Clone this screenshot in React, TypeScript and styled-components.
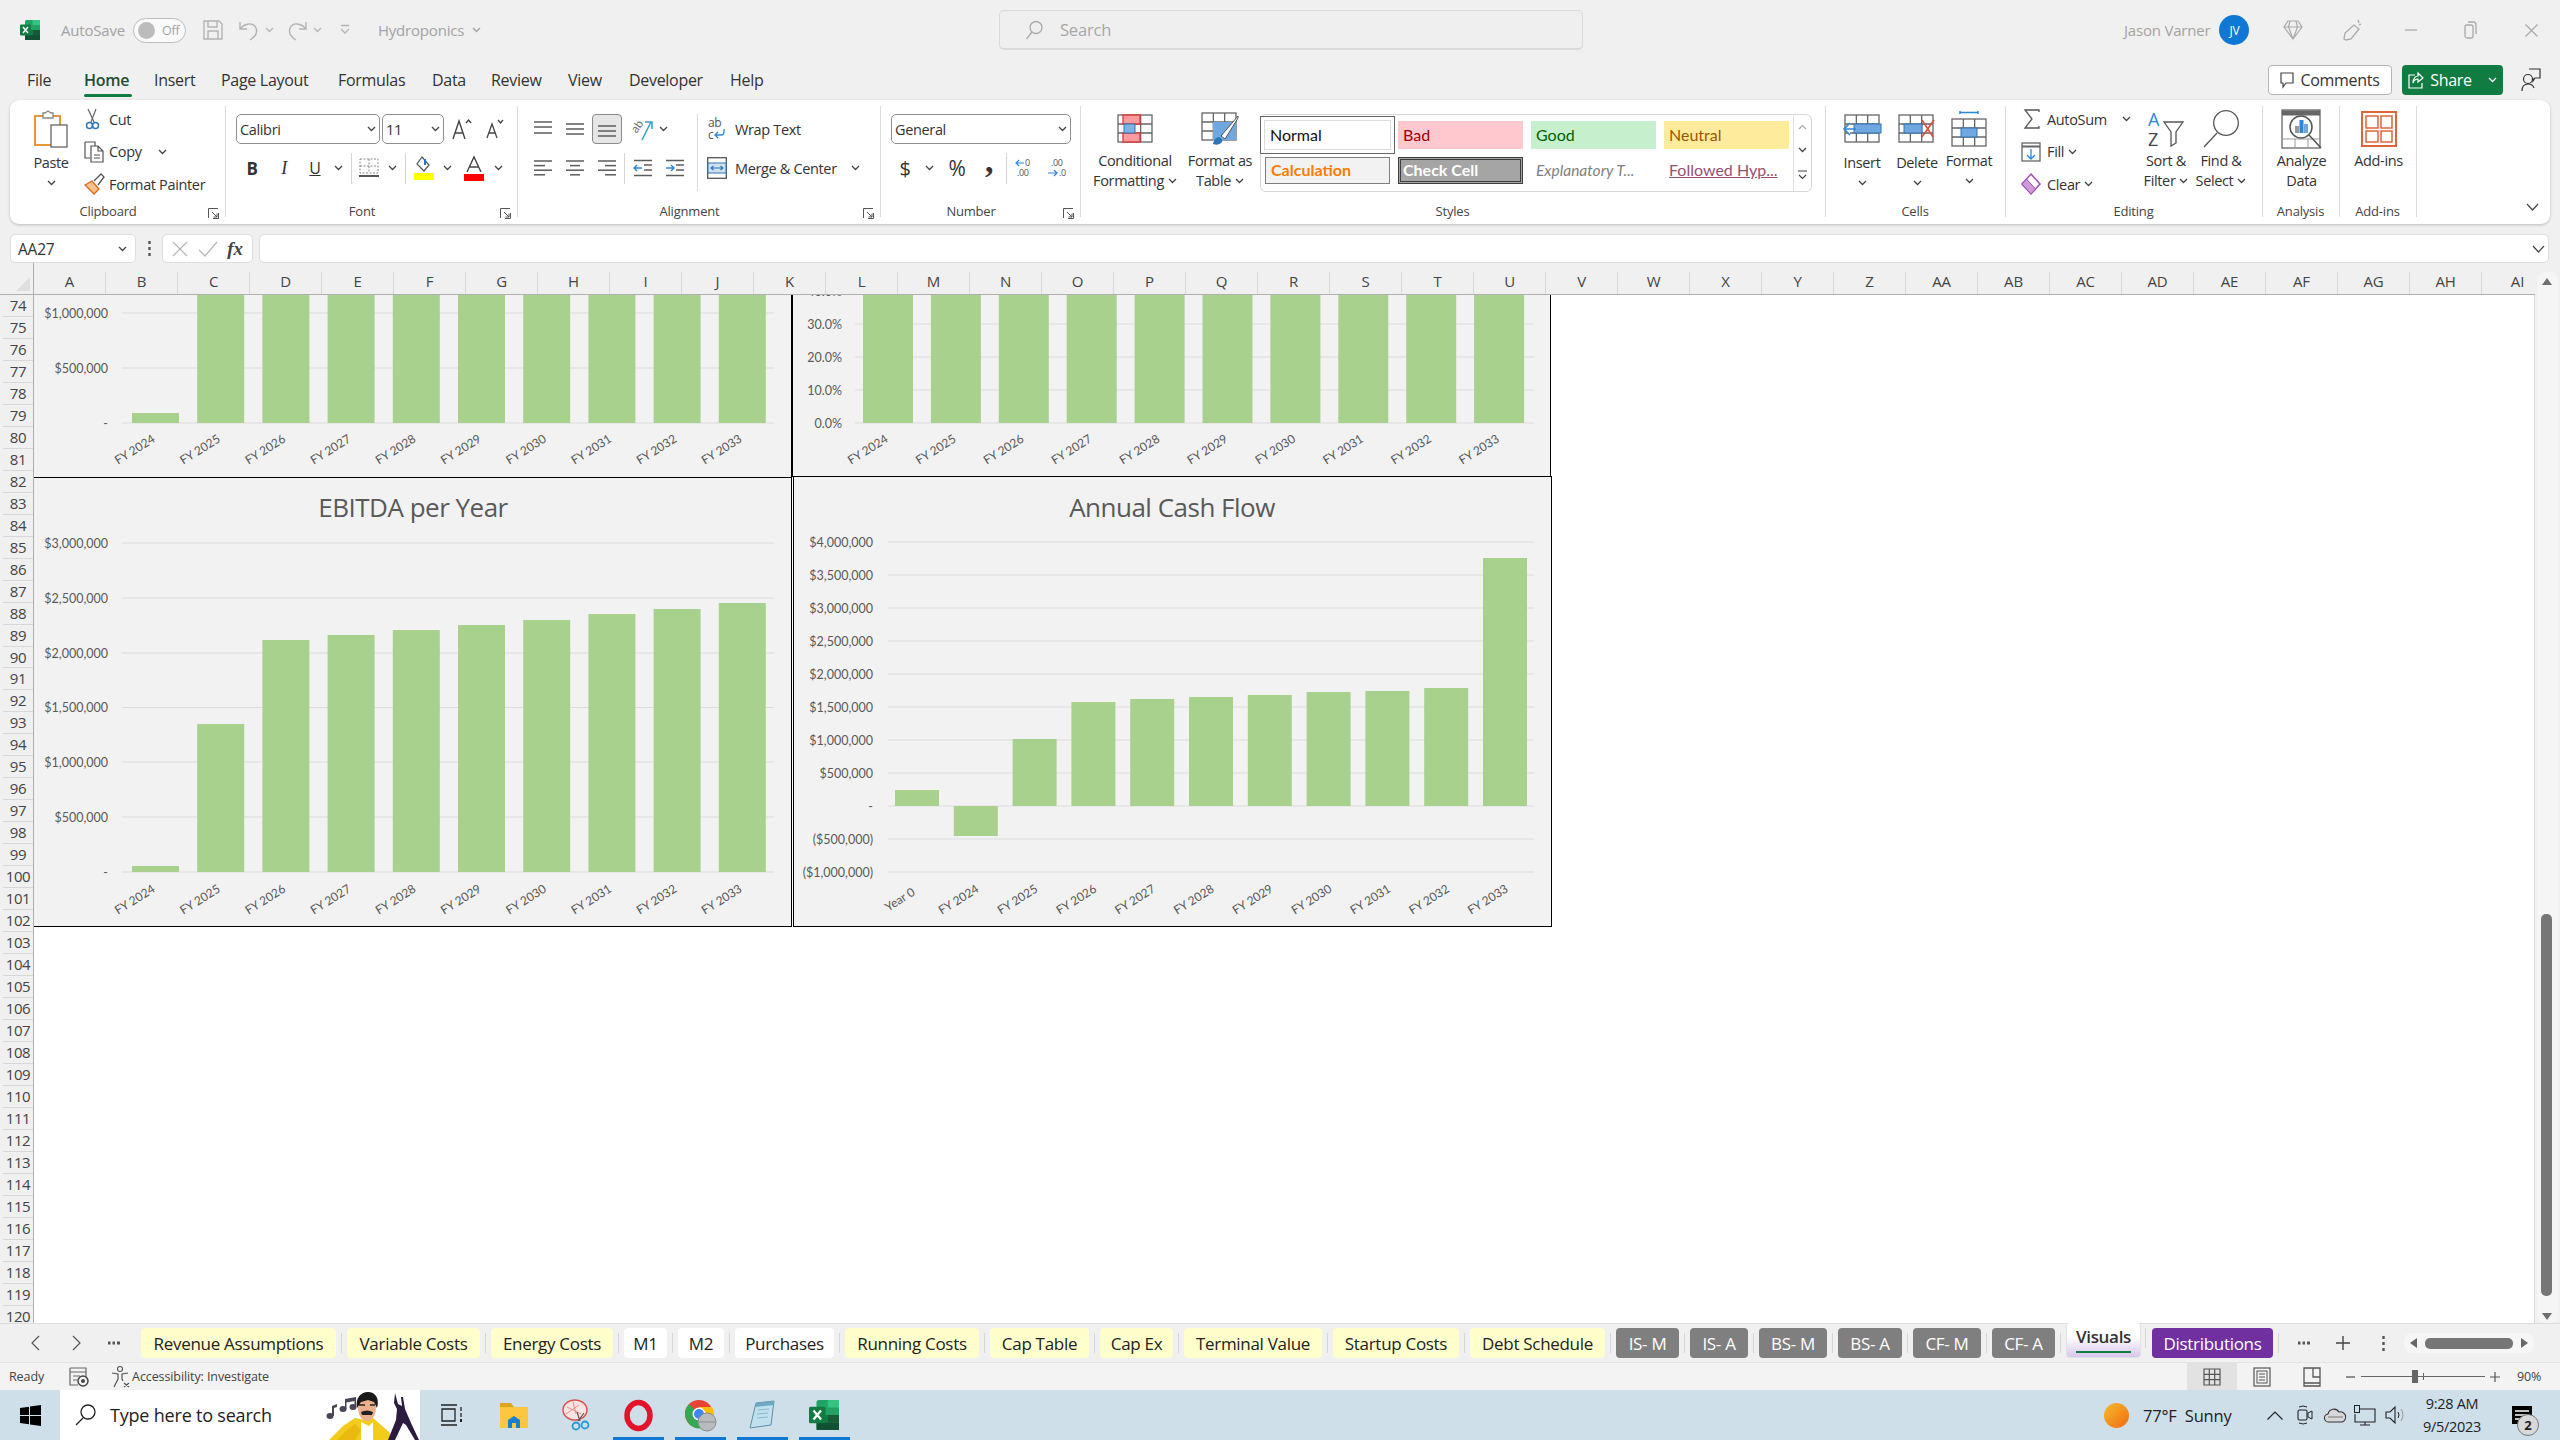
import React from "react";
import styled, { createGlobalStyle } from "styled-components";

const UI = `"Open Sans", "Noto Sans", sans-serif`;
const SHEET = `Lato, "Open Sans", sans-serif`;

const Global = createGlobalStyle`
  html, body { margin: 0; padding: 0; background: #f0f0f0; }
  * { box-sizing: border-box; }
`;

const Page = styled.div`
  width: 2560px;
  height: 1440px;
  display: flex;
  flex-direction: column;
  overflow: hidden;
  background: #f0f0f0;
  font-family: ${UI};
  color: #333;
`;

/* ---------- title bar ---------- */
const TitleBar = styled.div`
  height: 62px;
  padding-bottom: 2px;
  display: flex;
  align-items: center;
  color: #a3a3a3;
  font-size: 15px;
  letter-spacing: -0.2px;
`;
const TitleLeft = styled.div`
  width: 999px;
  display: flex;
  align-items: center;
  padding-left: 20px;
`;
const Gap = styled.span<{ $w: number }>`
  display: inline-block;
  flex: none;
  width: ${(p) => p.$w}px;
`;
const Toggle = styled.div`
  width: 53px;
  height: 25px;
  border: 1.5px solid #bdbdbd;
  border-radius: 13px;
  background: #fafafa;
  display: flex;
  align-items: center;
  padding-left: 4px;
  gap: 7px;
  font-size: 12.5px;
`;
const ToggleDot = styled.span`
  width: 17px;
  height: 17px;
  border-radius: 50%;
  background: #bcbcbc;
`;
const SearchBox = styled.div`
  width: 584px;
  height: 40px;
  border: 1.5px solid #dadada;
  border-bottom-width: 2.5px;
  border-radius: 5px;
  background: #efefef;
  display: flex;
  align-items: center;
  padding-left: 25px;
  gap: 17px;
  font-size: 16.5px;
  color: #a8a8a8;
`;
const TitleRight = styled.div`
  flex: 1;
  display: flex;
  align-items: center;
  padding-left: 541px;
`;
const Avatar = styled.div`
  width: 30px;
  height: 30px;
  border-radius: 50%;
  background: #0f78d4;
  color: #fff;
  font-size: 12px;
  display: flex;
  align-items: center;
  justify-content: center;
`;

/* ---------- menu row ---------- */
const MenuRow = styled.div`
  height: 38px;
  padding: 0 0 2px 27px;
  display: flex;
  align-items: center;
  font-size: 16px;
  letter-spacing: -0.3px;
  color: #333;
`;
const MenuItem = styled.div<{ $active?: boolean; $w: number }>`
  position: relative;
  flex: none;
  width: ${(p) => p.$w}px;
  white-space: nowrap;
  font-weight: ${(p) => (p.$active ? 600 : 400)};
  color: ${(p) => (p.$active ? "#1f4d36" : "#333")};
  &::after {
    content: "";
    display: ${(p) => (p.$active ? "block" : "none")};
    position: absolute;
    left: 0;
    top: 25px;
    width: 48px;
    height: 3px;
    border-radius: 2px;
    background: #107c41;
  }
`;
const MenuRight = styled.div`
  margin-left: auto;
  display: flex;
  align-items: center;
  gap: 10px;
  padding-right: 19px;
`;
const CommentsBtn = styled.div`
  width: 124px;
  height: 30px;
  background: #fff;
  border: 1px solid #b5b5b5;
  border-radius: 4px;
  display: flex;
  align-items: center;
  justify-content: center;
  gap: 6px;
  font-size: 16px;
`;
const ShareBtn = styled.div`
  width: 101px;
  height: 30px;
  margin-right: 8px;
  background: #107c41;
  color: #fff;
  border-radius: 4px;
  display: flex;
  align-items: center;
  justify-content: center;
  gap: 6px;
  font-size: 16px;
`;

/* ---------- ribbon ---------- */
const Ribbon = styled.div`
  position: relative;
  margin: 0 10px;
  height: 124px;
  padding-top: 6px;
  background: #fff;
  border-radius: 9px;
  box-shadow: 0 1px 3px rgba(0, 0, 0, 0.22);
  display: flex;
  font-size: 14.5px;
  letter-spacing: -0.35px;
  color: #333;
`;
const Group = styled.div<{ $w: number }>`
  position: relative;
  flex: none;
  width: ${(p) => p.$w}px;
  height: 118px;
  display: flex;
  flex-direction: column;
  &::after {
    content: "";
    position: absolute;
    right: 0;
    top: 0;
    width: 1px;
    height: 111px;
    background: #dcdcdc;
  }
`;
const GroupBody = styled.div<{ $pl?: number; $center?: boolean }>`
  height: 95px;
  display: flex;
  padding-left: ${(p) => p.$pl ?? 0}px;
  justify-content: ${(p) => (p.$center ? "center" : "flex-start")};
`;
const GroupLabel = styled.div<{ $launch?: boolean }>`
  height: 20px;
  line-height: 20px;
  text-align: center;
  font-size: 13px;
  letter-spacing: -0.2px;
  color: #444;
  padding-right: ${(p) => (p.$launch ? 20 : 2)}px;
`;
const Launcher = styled.span`
  position: absolute;
  right: 7px;
  top: 98px;
  width: 11px;
  height: 11px;
`;
const LargeBtn = styled.div<{ $w: number; $ml?: number }>`
  flex: none;
  width: ${(p) => p.$w}px;
  margin-left: ${(p) => p.$ml ?? 0}px;
  display: flex;
  flex-direction: column;
  align-items: center;
`;
const IconSlot = styled.div`
  height: 45px;
  display: flex;
  align-items: center;
  justify-content: center;
`;
const BtnLine = styled.div<{ $drop?: boolean }>`
  height: 20px;
  line-height: 20px;
  display: flex;
  align-items: center;
  gap: 4px;
  white-space: nowrap;
  margin-top: ${(p) => (p.$drop ? 2 : 0)}px;
`;
const SmallCol = styled.div<{ $w: number; $ml?: number }>`
  flex: none;
  width: ${(p) => p.$w}px;
  margin-left: ${(p) => p.$ml ?? 0}px;
  display: flex;
  flex-direction: column;
  gap: 6.5px;
`;
const SmallRow = styled.div`
  height: 26px;
  display: flex;
  align-items: center;
  white-space: nowrap;
`;
const Stack = styled.div<{ $w?: number; $line?: boolean }>`
  flex: none;
  width: ${(p) => (p.$w ? `${p.$w}px` : "auto")};
  height: 77px;
  margin-top: 8px;
  display: flex;
  flex-direction: column;
  gap: 9px;
  border-right: ${(p) => (p.$line ? "1px solid #dcdcdc" : "none")};
`;
const CtrlRow = styled.div`
  height: 30px;
  display: flex;
  align-items: center;
  white-space: nowrap;
`;
const Slot = styled.div<{ $w: number; $on?: boolean }>`
  flex: none;
  width: ${(p) => p.$w}px;
  height: 30px;
  display: flex;
  align-items: center;
  justify-content: center;
  border-radius: 4px;
  background: ${(p) => (p.$on ? "#e6e6e6" : "transparent")};
  border: ${(p) => (p.$on ? "1px solid #8a8a8a" : "none")};
`;
const RowSep = styled.span<{ $m: number }>`
  flex: none;
  width: 1px;
  height: 31px;
  margin: 0 ${(p) => p.$m}px;
  background: #d4d4d4;
`;
const Combo = styled.div<{ $w: number; $ml?: number }>`
  flex: none;
  width: ${(p) => p.$w}px;
  margin-left: ${(p) => p.$ml ?? 0}px;
  height: 30px;
  border: 1px solid #8f8f8f;
  border-radius: 5px;
  padding: 0 3px;
  display: flex;
  align-items: center;
  justify-content: space-between;
  font-size: 14.5px;
  color: #333;
`;
const Gallery = styled.div`
  flex: none;
  position: relative;
  width: 552px;
  height: 78px;
  margin: 8px 0 0 7px;
  border: 1px solid #d6d6d6;
  border-radius: 6px;
  padding: 6px 0 0 4px;
  display: grid;
  grid-template-columns: repeat(4, 125px);
  grid-template-rows: 28px 27px;
  gap: 8px;
`;
const StyleCell = styled.div<{ $kind: string }>`
  display: flex;
  align-items: center;
  padding: 0 0 2px 5px;
  font-family: ${SHEET};
  font-size: 16px;
  letter-spacing: 0;
  white-space: nowrap;
  ${(p) =>
    ({
      normal: "background:#fff;color:#111;outline:1px solid #ddd;box-shadow:0 0 0 4px #fff,0 0 0 5px #666;",
      bad: "background:#ffc7ce;color:#9c0006;",
      good: "background:#c6efce;color:#006100;",
      neutral: "background:#ffeb9c;color:#9c5700;",
      calc: "background:#f2f2f2;color:#fa7d00;font-weight:700;border:1px solid #7f7f7f;",
      check: "background:#a5a5a5;color:#fff;font-weight:700;border:3px double #3f3f3f;padding-left:2px;",
      note: "color:#7f7f7f;font-style:italic;font-size:15.5px;",
      link: "color:#954f72;text-decoration:underline;",
    }[p.$kind])}
`;
const GalleryScroll = styled.div`
  position: absolute;
  right: 0;
  top: 0;
  width: 18px;
  height: 76px;
  border-left: 1px solid #e2e2e2;
  display: flex;
  flex-direction: column;
  align-items: center;
  justify-content: space-around;
`;
const Collapse = styled.span`
  position: absolute;
  right: 11px;
  top: 103px;
  display: flex;
`;

/* ---------- formula bar ---------- */
const FormulaBar = styled.div`
  height: 29px;
  margin-top: 10px;
  padding: 0 11px 0 10px;
  display: flex;
  align-items: stretch;
`;
const NameBox = styled.div`
  width: 126px;
  background: #fff;
  border: 1px solid #dedede;
  border-radius: 5px;
  display: flex;
  align-items: center;
  justify-content: space-between;
  padding: 0 8px 0 7px;
  font-size: 15.5px;
  letter-spacing: -0.2px;
`;
const Dots = styled.div`
  width: 26px;
  display: flex;
  align-items: center;
  justify-content: center;
`;
const FxBox = styled.div`
  width: 91px;
  background: #fff;
  border: 1px solid #dedede;
  border-radius: 5px;
  display: flex;
  align-items: center;
  justify-content: space-around;
  padding: 0 4px;
  font-family: "Liberation Serif", serif;
  font-style: italic;
  font-weight: 700;
  font-size: 19px;
  color: #444;
`;
const FormulaInput = styled.div`
  flex: 1;
  margin-left: 6px;
  background: #fff;
  border: 1px solid #dedede;
  border-radius: 5px;
  display: flex;
  align-items: center;
  justify-content: flex-end;
  padding-right: 3px;
`;

/* ---------- sheet ---------- */
const ColHeaderRow = styled.div`
  height: 32px;
  display: flex;
  align-items: flex-end;
`;
const Corner = styled.div`
  flex: none;
  width: 34px;
  height: 32px;
  position: relative;
  border-right: 1px solid #b0b0b0;
  border-bottom: 1.5px solid #b0b0b0;
  &::after {
    content: "";
    position: absolute;
    right: 3px;
    bottom: 3px;
    border-style: solid;
    border-width: 0 0 14px 14px;
    border-color: transparent transparent #dfdfdf transparent;
  }
`;
const ColHeaders = styled.div`
  flex: none;
  width: 2501px;
  display: flex;
  overflow: hidden;
  border-bottom: 1.5px solid #b0b0b0;
`;
const ColHead = styled.div`
  flex: none;
  width: 72px;
  height: 22px;
  line-height: 19px;
  text-align: center;
  font-size: 15px;
  letter-spacing: -0.2px;
  border-right: 1px solid #d8d8d8;
  color: #444;
`;
const SheetBody = styled.div`
  height: 1028px;
  display: flex;
`;
const RowHeaders = styled.div`
  flex: none;
  width: 34px;
  overflow: hidden;
  border-right: 1px solid #b0b0b0;
`;
const RowHead = styled.div`
  height: 21.98px;
  line-height: 21px;
  text-align: center;
  font-size: 15px;
  letter-spacing: -0.4px;
  color: #444;
  border-bottom: 1px solid #d8d8d8;
  margin-left: 3px;
`;
const Grid = styled.div`
  position: relative;
  flex: none;
  width: 2501px;
  background: #fff;
  overflow: hidden;
  border-right: 1px solid #dcdcdc;
`;
const ScrollTrack = styled.div`
  position: relative;
  margin: -23px 2px 0 2px;
  width: 21px;
  height: 1051px;
  border-radius: 8px;
  background: #f5f5f5;
`;
const ScrollArrow = styled.span<{ $up?: boolean }>`
  position: absolute;
  left: 5px;
  ${(p) => (p.$up ? "top: 6px;" : "bottom: 3px;")}
  border-style: solid;
  border-width: ${(p) => (p.$up ? "0 5.5px 7px 5.5px" : "7px 5.5px 0 5.5px")};
  border-color: ${(p) =>
    p.$up
      ? "transparent transparent #6e6e6e transparent"
      : "#6e6e6e transparent transparent transparent"};
`;
const ScrollThumb = styled.span`
  position: absolute;
  left: 4px;
  top: 642px;
  width: 11px;
  height: 382px;
  border-radius: 5px;
  background: #767676;
`;
const ChartFrame = styled.div<{ $x: number; $y: number; $w: number; $h: number; $top?: boolean; $left?: boolean }>`
  position: absolute;
  left: ${(p) => p.$x}px;
  top: ${(p) => p.$y}px;
  width: ${(p) => p.$w}px;
  height: ${(p) => p.$h}px;
  background: #f2f2f2;
  border-right: 1px solid #000;
  border-bottom: 1px solid #000;
  border-top: ${(p) => (p.$top ? "1px solid #000" : "none")};
  border-left: ${(p) => (p.$left ? "1px solid #000" : "none")};
  overflow: hidden;
`;
const ChartSvg = styled.svg`
  position: absolute;
  left: 0;
  top: 0;
  display: block;
`;

/* ---------- sheet tabs + status ---------- */
const TabBar = styled.div`
  height: 40px;
  border-top: 1px solid #dcdcdc;
  border-bottom: 1px solid #e4e4e4;
  background: #f0f0f0;
  display: flex;
  align-items: flex-start;
`;
const TabNav = styled.div`
  flex: none;
  width: 141px;
  height: 38px;
  padding-left: 31px;
  display: flex;
  align-items: center;
`;
const Tabs = styled.div`
  display: flex;
  gap: 11px;
  padding-top: 4px;
`;
const Tab = styled.div<{ $w: number; $kind: string }>`
  position: relative;
  flex: none;
  width: ${(p) => p.$w}px;
  height: 30px;
  border-radius: 4px;
  font-size: 17px;
  letter-spacing: -0.3px;
  display: flex;
  align-items: center;
  justify-content: center;
  white-space: nowrap;
  ${(p) =>
    ({
      yellow: "background:#ffffcc;color:#222;",
      white: "background:#fff;color:#222;",
      gray: "background:#7f7f7f;color:#fff;",
      purple: "background:#7030a0;color:#fff;",
      active:
        "height:35px;margin-top:-5px;padding-bottom:8px;font-weight:600;color:#333;background:linear-gradient(#fff,#fff 40%,#d9c7ea);border:1px solid #e2e2e2;border-top:none;",
    }[p.$kind])}
  &::after {
    content: "";
    position: absolute;
    right: -6px;
    top: 5px;
    width: 1px;
    height: 20px;
    background: #d6d6d6;
  }
  &::before {
    content: "";
    display: ${(p) => (p.$kind === "active" ? "block" : "none")};
    position: absolute;
    left: 9px;
    right: 9px;
    bottom: 4px;
    height: 2px;
    background: #107c41;
  }
`;
const TabTools = styled.div`
  flex: none;
  margin-left: 11px;
  height: 38px;
  display: flex;
  align-items: center;
`;
const HScroll = styled.div`
  width: 130px;
  height: 20px;
  margin-left: 19px;
  background: #f6f6f6;
  border-radius: 8px;
  display: flex;
  align-items: center;
  justify-content: space-between;
  padding: 0 6px;
`;
const HThumb = styled.span`
  width: 88px;
  height: 11px;
  border-radius: 5px;
  background: #767676;
`;
const HArrow = styled.span<{ $right?: boolean }>`
  border-style: solid;
  border-width: ${(p) => (p.$right ? "5.5px 0 5.5px 7px" : "5.5px 7px 5.5px 0")};
  border-color: ${(p) =>
    p.$right
      ? "transparent transparent transparent #666"
      : "transparent #666 transparent transparent"};
`;
const StatusBar = styled.div`
  height: 27px;
  background: #f3f3f3;
  display: flex;
  align-items: center;
  padding-left: 9px;
  font-size: 12.5px;
  letter-spacing: -0.1px;
  color: #444;
`;
const StatusRight = styled.div`
  margin-left: auto;
  height: 27px;
  display: flex;
  align-items: center;
`;
const ViewBtn = styled.div<{ $on?: boolean }>`
  width: 50px;
  height: 27px;
  display: flex;
  align-items: center;
  justify-content: center;
  background: ${(p) => (p.$on ? "#e2e2e2" : "transparent")};
`;
const ZoomTrack = styled.div`
  position: relative;
  width: 124px;
  height: 1px;
  margin: 0 5px;
  background: #666;
  &::before {
    content: "";
    position: absolute;
    left: 51px;
    top: -6px;
    width: 6px;
    height: 13px;
    background: #666;
  }
  &::after {
    content: "";
    position: absolute;
    left: 62px;
    top: -3px;
    width: 1px;
    height: 7px;
    background: #666;
  }
`;
const ZoomPct = styled.span`
  width: 36px;
`;

/* ---------- taskbar ---------- */
const Taskbar = styled.div`
  height: 50px;
  background: #cfdfea;
  display: flex;
  align-items: center;
  color: #222;
`;
const StartBtn = styled.div`
  width: 60px;
  display: flex;
  justify-content: center;
`;
const TaskSearch = styled.div`
  position: relative;
  width: 360px;
  height: 50px;
  background: #fff;
  display: flex;
  align-items: center;
  padding-left: 15px;
  gap: 14px;
  font-size: 18px;
  letter-spacing: -0.2px;
  overflow: hidden;
`;
const SearchArt = styled.svg`
  position: absolute;
  right: 0;
  top: 0;
`;
const TaskIcon = styled.div<{ $w?: number; $running?: boolean }>`
  position: relative;
  flex: none;
  width: ${(p) => p.$w ?? 62}px;
  height: 50px;
  display: flex;
  align-items: center;
  justify-content: center;
  &::after {
    content: "";
    display: ${(p) => (p.$running ? "block" : "none")};
    position: absolute;
    left: 6px;
    right: 5px;
    bottom: 0;
    height: 3px;
    background: #0f78d4;
  }
`;
const Tray = styled.div`
  margin-left: auto;
  display: flex;
  align-items: center;
  height: 50px;
`;
const Weather = styled.div`
  width: 131px;
  display: flex;
  align-items: center;
  gap: 14px;
  font-size: 16.5px;
  letter-spacing: -0.2px;
  white-space: pre;
`;
const SunDot = styled.span`
  flex: none;
  width: 25px;
  height: 25px;
  border-radius: 50%;
  background: linear-gradient(135deg, #f5bb2c, #f26a10);
`;
const TrayIcon = styled.div`
  width: 30px;
  display: flex;
  justify-content: center;
`;
const Clock = styled.div`
  width: 64px;
  margin-left: 10px;
  text-align: center;
  font-size: 14.5px;
  line-height: 23px;
  letter-spacing: -0.3px;
  white-space: nowrap;
`;
const Notify = styled.div`
  position: relative;
  width: 76px;
  height: 50px;
  display: flex;
  align-items: center;
  justify-content: center;
`;
const NotifyBadge = styled.span`
  position: absolute;
  left: 33px;
  top: 24px;
  width: 22px;
  height: 22px;
  border-radius: 50%;
  background: #d8d8d8;
  border: 1px solid #777;
  font-size: 13px;
  font-weight: 700;
  display: flex;
  align-items: center;
  justify-content: center;
`;
const BoldB = styled.b`
  font-size: 17px;
`;
const ItalicI = styled.i`
  font-family: "Liberation Serif", serif;
  font-size: 18px;
`;
const UnderU = styled.u`
  font-size: 16px;
`;
const NumGlyph = styled.span<{ $s: number }>`
  font-size: ${(p) => p.$s}px;
`;
const CommaGlyph = styled.b`
  font-family: "Liberation Serif", serif;
  font-size: 34px;
  margin-top: -14px;
`;

/* ---------- icons ---------- */
const IconSvg = styled.svg`
  flex: none;
  display: block;
  overflow: visible;
`;
type Sv = { children: React.ReactNode; w: number; h: number };
const Ico = ({ children, w, h }: Sv) => (
  <IconSvg width={w} height={h} viewBox={`0 0 ${w} ${h}`} fill="none">
    {children}
  </IconSvg>
);
const Chev = ({ c = "#444" }: { c?: string }) => (
  <Ico w={9} h={6}>
    <path d="M1 1l3.5 3.5L8 1" stroke={c} strokeWidth="1.3" />
  </Ico>
);
const G = "#5c5c5c";

const ExcelLogo = ({ s = 20 }: { s?: number }) => (
  <IconSvg width={s} height={s} viewBox="0 0 20 20">
    <rect x="5" y="0" width="15" height="20" rx="1.5" fill="#21a366" />
    <rect x="12.5" y="0" width="7.5" height="5" fill="#33c481" />
    <rect x="5" y="10" width="7.5" height="5" fill="#107c41" />
    <rect x="12.5" y="10" width="7.5" height="5" fill="#185c37" />
    <rect x="5" y="15" width="15" height="5" fill="#0f5132" />
    <rect x="0" y="4.5" width="11" height="11" rx="1" fill="#107c41" />
    <path d="M3 7l5 6M8 7l-5 6" stroke="#fff" strokeWidth="1.5" />
  </IconSvg>
);
const AlignV = ({ at }: { at: number[] }) => (
  <Ico w={18} h={18}>
    {at.map((y) => (
      <path key={y} d={`M0 ${y}h18`} stroke={G} strokeWidth="1.5" />
    ))}
  </Ico>
);
const AlignH = ({ x }: { x: [number, number][] }) => (
  <Ico w={18} h={18}>
    {x.map(([a, b], i) => (
      <path key={i} d={`M${a} ${2 + i * 4.6}H${b}`} stroke={G} strokeWidth="1.5" />
    ))}
  </Ico>
);
const Launch = () => (
  <svg width="11" height="11" viewBox="0 0 11 11" fill="none">
    <path d="M.5 10V.5H10M4 4l5 5M9 5.5V9H5.5M10.5 5v5.5H5" stroke="#555" strokeWidth="1" />
  </svg>
);
const TableGrid = ({ x, y, w, h, c = "#666" }: { x: number; y: number; w: number; h: number; c?: string }) => (
  <g stroke={c} strokeWidth="1.3">
    <rect x={x} y={y} width={w} height={h} />
    <path d={`M${x + w / 3} ${y}v${h}M${x + (2 * w) / 3} ${y}v${h}M${x} ${y + h / 3}h${w}M${x} ${y + (2 * h) / 3}h${w}`} />
  </g>
);

const FreddieArt = () => (
  <SearchArt width="97" height="50" viewBox="0 0 97 50">
    <g fill="#4b4457">
      <ellipse cx="7" cy="26" rx="3.5" ry="3" />
      <path d="M9 26V16l5-2v3l-3 1v8z" />
      <ellipse cx="20" cy="19" rx="3.5" ry="3" />
      <ellipse cx="30" cy="17" rx="3.5" ry="3" />
      <path d="M22 19V9l11-2v10h-1.500V11l-8 1.500V19z" />
    </g>
    <path d="M6 50l14-14 12-8 10 2 8-2 16 14 4 8z" fill="#f3cb1b" />
    <path d="M14 50l10-10 8-6 6 6-6 10z" fill="#e9b90e" />
    <path d="M38 50V32l8 4 4-4v18z" fill="#fff" />
    <ellipse cx="44" cy="18" rx="9" ry="13" fill="#eab08c" />
    <path d="M34 18c-2-10 4-16 11-16s12 6 9 16l-3-6-6-2-7 2z" fill="#191919" />
    <path d="M38 22q6-3 12 0l-1 3h-10z" fill="#222" />
    <path d="M36 15h6M47 15h5" stroke="#222" strokeWidth="1.500" />
    <path
      d="M72 3l3 11 4 2-1-9 2 0 2 12 6 14 8 17h-4l-9-15-3-2-8 17h-7l8-20 1-11-3-6z"
      fill="#2b1b3f"
    />
  </SearchArt>
);

/* ---------- charts ---------- */
interface ChartProps {
  x: number;
  y: number;
  w: number;
  h: number;
  top?: boolean;
  left?: boolean;
  title?: string;
  titleX?: number;
  plot: [number, number];
  labelEnd: number;
  grids: [number, string][];
  bars: [number, number][];
  barX: number;
  barStep: number;
  barW: number;
  labels: string[];
  labelX: number;
  labelStep: number;
  labelY: number;
}

// the svg sits inside the frame's border, so shift the view by the border to keep page coordinates
function Chart(p: ChartProps) {
  const vx = p.x + (p.left ? 1 : 0);
  const vy = p.y + (p.top ? 1 : 0);
  return (
    <ChartFrame $x={p.x - 34} $y={p.y - 295} $w={p.w} $h={p.h} $top={p.top} $left={p.left}>
      <ChartSvg width={p.w} height={p.h} viewBox={`${vx} ${vy} ${p.w} ${p.h}`}>
        {p.title && (
          <text x={p.titleX} y={517} textAnchor="middle" fontFamily={UI} fontSize="26" letterSpacing="-0.5" fill="#595959">
            {p.title}
          </text>
        )}
        {p.grids.map(([gy]) => (
          <line key={gy} x1={p.plot[0]} x2={p.plot[1]} y1={gy} y2={gy} stroke="#dcdcdc" strokeWidth="1" />
        ))}
        {p.grids.map(([gy, t]) => (
          <text key={t} x={p.labelEnd} y={gy + 4.5} textAnchor="end" fontFamily={SHEET} fontSize="12.5" fill="#595959">
            {t}
          </text>
        ))}
        {p.bars.map(([a, b], i) => (
          <rect key={i} x={p.barX + i * p.barStep} y={a} width={p.barW} height={b - a} fill="#a9d18e" />
        ))}
        {p.labels.map((t, i) => {
          const lx = p.labelX + i * p.labelStep;
          return (
            <text
              key={t}
              x={lx}
              y={p.labelY}
              textAnchor="middle"
              fontFamily={SHEET}
              fontSize="12"
              fill="#595959"
              transform={`rotate(-32 ${lx} ${p.labelY})`}
            >
              {t}
            </text>
          );
        })}
      </ChartSvg>
    </ChartFrame>
  );
}

const FY = ["FY 2024", "FY 2025", "FY 2026", "FY 2027", "FY 2028", "FY 2029", "FY 2030", "FY 2031", "FY 2032", "FY 2033"];
const clipped = (base: number, first: number): [number, number][] =>
  FY.map((_, i) => [i === 0 ? first : 280, base]);
const tops = (base: number, t: number[]): [number, number][] => t.map((v) => [v, base]);

const COLS = [
  ..."ABCDEFGHIJKLMNOPQRSTUVWXYZ".split(""),
  ..."ABCDEFGHI".split("").map((c) => `A${c}`),
];
const ROWS = Array.from({ length: 47 }, (_, i) => 74 + i);

const TABS: { n: string; w: number; k: string }[] = [
  { n: "Revenue Assumptions", w: 195, k: "yellow" },
  { n: "Variable Costs", w: 133, k: "yellow" },
  { n: "Energy Costs", w: 122, k: "yellow" },
  { n: "M1", w: 43, k: "white" },
  { n: "M2", w: 46, k: "white" },
  { n: "Purchases", w: 99, k: "white" },
  { n: "Running Costs", w: 134, k: "yellow" },
  { n: "Cap Table", w: 99, k: "yellow" },
  { n: "Cap Ex", w: 73, k: "yellow" },
  { n: "Terminal Value", w: 138, k: "yellow" },
  { n: "Startup Costs", w: 126, k: "yellow" },
  { n: "Debt Schedule", w: 135, k: "yellow" },
  { n: "IS- M", w: 63, k: "gray" },
  { n: "IS- A", w: 58, k: "gray" },
  { n: "BS- M", w: 68, k: "gray" },
  { n: "BS- A", w: 64, k: "gray" },
  { n: "CF- M", w: 68, k: "gray" },
  { n: "CF- A", w: 63, k: "gray" },
  { n: "Visuals", w: 75, k: "active" },
  { n: "Distributions", w: 121, k: "purple" },
];

export default function App() {
  return (
    <Page>
      <Global />
      <TitleBar>
        <TitleLeft>
          <ExcelLogo />
          <Gap $w={21} />
          <span>AutoSave</span>
          <Gap $w={8} />
          <Toggle>
            <ToggleDot />
            Off
          </Toggle>
          <Gap $w={17} />
          <Ico w={20} h={20}>
            <path d="M1 1h15l3 3v15H1z M5 1v6h9V1 M5 19v-8h10v8" stroke="#b3b3b3" strokeWidth="1.4" />
          </Ico>
          <Gap $w={16} />
          <Ico w={20} h={21}>
            <path d="M1 2v7h7M1.500 8.500C6 3 14 2 17 8c2 5-1 9-6 12" stroke="#b3b3b3" strokeWidth="1.400" />
          </Ico>
          <Gap $w={6} />
          <Chev c="#b3b3b3" />
          <Gap $w={13} />
          <Ico w={20} h={21}>
            <path d="M19 2v7h-7M18.500 8.500C14 3 6 2 3 8c-2 5 1 9 6 12" stroke="#b3b3b3" strokeWidth="1.400" />
          </Ico>
          <Gap $w={6} />
          <Chev c="#b3b3b3" />
          <Gap $w={18} />
          <Ico w={10} h={12}>
            <path d="M1 1.500h8M1 5l4 4 4-4" stroke="#b3b3b3" strokeWidth="1.300" />
          </Ico>
          <Gap $w={28} />
          <span>Hydroponics</span>
          <Gap $w={8} />
          <Chev c="#a3a3a3" />
        </TitleLeft>
        <SearchBox>
          <Ico w={18} h={20}>
            <circle cx="11" cy="7.500" r="6" stroke="#aaa" strokeWidth="1.300" />
            <path d="M7 12l-5.500 7" stroke="#aaa" strokeWidth="1.300" />
          </Ico>
          Search
        </SearchBox>
        <TitleRight>
          <span>Jason Varner</span>
          <Gap $w={9} />
          <Avatar>JV</Avatar>
          <Gap $w={34} />
          <Ico w={20} h={20}>
            <path d="M5 1h10l4 6-9 12L1 7zM1 7h18M7 1L5.500 7 10 19l4.500-12L13 1" stroke="#aaa" strokeWidth="1.200" />
          </Ico>
          <Gap $w={39} />
          <Ico w={20} h={22}>
            <path d="M12 6l5 4-8 10-5 1-2-1 1-6zM16 1l1 3M19 5l-2 1" stroke="#aaa" strokeWidth="1.300" />
          </Ico>
          <Gap $w={43} />
          <Ico w={12} h={2}>
            <path d="M0 1h12" stroke="#aaa" strokeWidth="1.300" />
          </Ico>
          <Gap $w={47} />
          <Ico w={13} h={18}>
            <rect x="1" y="4" width="8" height="13" rx="2" stroke="#aaa" strokeWidth="1.300" />
            <path d="M4 1h5q3 0 3 3v9" stroke="#aaa" strokeWidth="1.300" />
          </Ico>
          <Gap $w={48} />
          <Ico w={13} h={13}>
            <path d="M.5.500l12 12M12.500.500l-12 12" stroke="#aaa" strokeWidth="1.300" />
          </Ico>
        </TitleRight>
      </TitleBar>

      <MenuRow>
        <MenuItem $w={57}>File</MenuItem>
        <MenuItem $w={70} $active>Home</MenuItem>
        <MenuItem $w={67}>Insert</MenuItem>
        <MenuItem $w={117}>Page Layout</MenuItem>
        <MenuItem $w={94}>Formulas</MenuItem>
        <MenuItem $w={59}>Data</MenuItem>
        <MenuItem $w={77}>Review</MenuItem>
        <MenuItem $w={61}>View</MenuItem>
        <MenuItem $w={101}>Developer</MenuItem>
        <MenuItem $w={40}>Help</MenuItem>
        <MenuRight>
          <CommentsBtn>
            <Ico w={14} h={18}>
              <path d="M1 2h12v10H6l-3 4v-4H1z" stroke="#444" strokeWidth="1.200" />
            </Ico>
            Comments
          </CommentsBtn>
          <ShareBtn>
            <Ico w={16} h={18}>
              <path d="M7 4H1v13h13v-5M5 12c0-5 3-7 5-7V2l5 5-5 4V8c-2 0-4 1-5 4z" stroke="#fff" strokeWidth="1.200" />
            </Ico>
            Share
            <Gap $w={4} />
            <Chev c="#fff" />
          </ShareBtn>
          <Ico w={20} h={24}>
            <circle cx="7" cy="11" r="4.500" stroke="#333" strokeWidth="1.200" />
            <path d="M1 23c0-5 3-7 6-7s5 1 6 4M8 1h11v9h-5l-2 3v-3" stroke="#333" strokeWidth="1.200" />
          </Ico>
        </MenuRight>
      </MenuRow>

      <Ribbon>
        <Group $w={216}>
          <GroupBody $pl={24}>
            <LargeBtn $w={34}>
              <IconSlot>
                <Ico w={34} h={38}>
                  <rect x="1" y="6" width="25" height="29" stroke="#e8963c" strokeWidth="2" fill="#fff" />
                  <path d="M9 6V3h2l3-2 3 2h2v5H9z" fill="#fff" stroke="#888" strokeWidth="1.300" />
                  <rect x="17" y="15" width="16" height="22" fill="#fff" stroke="#666" strokeWidth="1.300" />
                </Ico>
              </IconSlot>
              <BtnLine $drop>Paste</BtnLine>
              <BtnLine><Chev /></BtnLine>
            </LargeBtn>
            <SmallCol $w={130} $ml={16}>
              <SmallRow>
                <Ico w={25} h={22}>
                  <path d="M4 1l6 13M12 1L7 14" stroke="#666" strokeWidth="1.200" />
                  <circle cx="5.500" cy="17.500" r="3" stroke="#2e75b6" strokeWidth="1.500" />
                  <circle cx="11.500" cy="17.500" r="3" stroke="#2e75b6" strokeWidth="1.500" />
                </Ico>
                Cut
              </SmallRow>
              <SmallRow>
                <Ico w={25} h={22}>
                  <path d="M1 1h10v4M1 1v16h5" stroke="#555" strokeWidth="1.200" />
                  <path d="M7 5h7l5 5v11H7zM14 5v5h5M10 14h6M10 17h6" stroke="#555" strokeWidth="1.200" fill="#fff" />
                </Ico>
                Copy
                <Gap $w={16} />
                <Chev />
              </SmallRow>
              <SmallRow>
                <Ico w={25} h={22}>
                  <path d="M1 12l7-4 7 8-5 5z" fill="#f6c28b" stroke="#d9681d" strokeWidth="1.300" />
                  <path d="M10 8l7-7 3 3-6 8" stroke="#555" strokeWidth="1.300" fill="#fff" />
                </Ico>
                Format Painter
              </SmallRow>
            </SmallCol>
          </GroupBody>
          <GroupLabel $launch>Clipboard</GroupLabel>
          <Launcher><Launch /></Launcher>
        </Group>

        <Group $w={292}>
          <GroupBody $pl={10}>
            <Stack>
              <CtrlRow>
                <Combo $w={144}>Calibri<Chev /></Combo>
                <Combo $w={62} $ml={2}>11<Chev /></Combo>
                <Gap $w={8} />
                <Ico w={20} h={22}>
                  <path d="M1 21L7 3l6 18M3.500 15h7M14 5l2.500-3L19 5" stroke="#444" strokeWidth="1.400" />
                </Ico>
                <Gap $w={14} />
                <Ico w={18} h={20}>
                  <path d="M1 19L6 5l5 14M3 14h6M12 1l2.500 3L17 1" stroke="#444" strokeWidth="1.300" />
                </Ico>
              </CtrlRow>
              <CtrlRow>
                <Slot $w={32}><BoldB>B</BoldB></Slot>
                <Slot $w={32}><ItalicI>I</ItalicI></Slot>
                <Slot $w={30}><UnderU>U</UnderU></Slot>
                <Slot $w={16}><Chev /></Slot>
                <RowSep $m={5} />
                <Slot $w={24}>
                  <Ico w={20} h={20}>
                    <path d="M1 1h18v14H1zM10 1v14M1 8h18" stroke="#888" strokeWidth="1" strokeDasharray="2 1.500" />
                    <path d="M0 18h20" stroke="#555" strokeWidth="2" />
                  </Ico>
                </Slot>
                <Slot $w={22}><Chev /></Slot>
                <RowSep $m={2} />
                <Slot $w={32}>
                  <Ico w={20} h={24}>
                    <path d="M8 1l7 8-5 6-7-7z" stroke="#555" strokeWidth="1.200" fill="#fff" />
                    <path d="M11 9v-6" stroke="#2e75b6" strokeWidth="2" />
                    <rect x="0" y="17" width="20" height="7" fill="#ffff00" />
                  </Ico>
                </Slot>
                <Slot $w={14}><Chev /></Slot>
                <Slot $w={40}>
                  <Ico w={20} h={25}>
                    <path d="M3 16L10 1l7 15M5.500 11h9" stroke="#444" strokeWidth="1.400" />
                    <rect x="0" y="18" width="20" height="7" fill="#ff0000" />
                  </Ico>
                </Slot>
                <Slot $w={8}><Chev /></Slot>
              </CtrlRow>
            </Stack>
          </GroupBody>
          <GroupLabel $launch>Font</GroupLabel>
          <Launcher><Launch /></Launcher>
        </Group>

        <Group $w={363}>
          <GroupBody $pl={10}>
            <Stack $w={170} $line>
              <CtrlRow>
                <Slot $w={30}><AlignV at={[2, 7, 13]} /></Slot>
                <Slot $w={34}><AlignV at={[4, 9, 14]} /></Slot>
                <Slot $w={30} $on><AlignV at={[6, 11, 16]} /></Slot>
                <Slot $w={40}>
                  <Ico w={24} h={26}>
                    <text x="2" y="15" fontFamily={UI} fontSize="11" fill="#666" transform="rotate(-55 7 12)">ab</text>
                    <path d="M12 24L21 6M15 6h7v7" stroke="#2e9fd8" strokeWidth="1.500" />
                  </Ico>
                </Slot>
                <Slot $w={2}><Chev /></Slot>
              </CtrlRow>
              <CtrlRow>
                <Slot $w={30}><AlignH x={[[0, 18], [0, 11], [0, 18], [0, 11]]} /></Slot>
                <Slot $w={34}><AlignH x={[[0, 18], [4, 14], [0, 18], [4, 14]]} /></Slot>
                <Slot $w={30}><AlignH x={[[0, 18], [7, 18], [0, 18], [7, 18]]} /></Slot>
                <RowSep $m={2} />
                <Slot $w={33}>
                  <Ico w={19} h={18}>
                    <path d="M0 9h8M3 6L0 9l3 3" stroke="#2e86d8" strokeWidth="1.400" />
                    <path d="M0 1.500h18M10 6h8M10 11h8M0 16.500h18" stroke={G} strokeWidth="1.400" />
                  </Ico>
                </Slot>
                <Slot $w={30}>
                  <Ico w={19} h={18}>
                    <path d="M0 9h8M5 6l3 3-3 3" stroke="#2e86d8" strokeWidth="1.400" />
                    <path d="M0 1.500h18M10 6h8M10 11h8M0 16.500h18" stroke={G} strokeWidth="1.400" />
                  </Ico>
                </Slot>
              </CtrlRow>
            </Stack>
            <Stack>
              <CtrlRow>
                <Slot $w={37}>
                  <Ico w={19} h={24}>
                    <text x="1" y="10" fontFamily={UI} fontSize="12" fill="#555">ab</text>
                    <text x="1" y="22" fontFamily={UI} fontSize="12" fill="#555">c</text>
                    <path d="M17 12v3q0 3-3 3H9M11 15l-3 3 3 3" stroke="#2e86d8" strokeWidth="1.300" />
                  </Ico>
                </Slot>
                Wrap Text
              </CtrlRow>
              <CtrlRow>
                <Slot $w={37}>
                  <Ico w={20} h={22}>
                    <rect x=".7" y=".7" width="18.600" height="20.600" stroke="#555" strokeWidth="1.300" />
                    <rect x="1" y="6" width="18" height="10" fill="#cfe3f5" stroke="#2e75b6" />
                    <path d="M4 11h12M6.500 9L4 11l2.500 2M13.500 9l2.500 2-2.500 2" stroke="#2e75b6" strokeWidth="1.100" />
                  </Ico>
                </Slot>
                Merge &amp; Center
                <Gap $w={14} />
                <Chev />
              </CtrlRow>
            </Stack>
          </GroupBody>
          <GroupLabel $launch>Alignment</GroupLabel>
          <Launcher><Launch /></Launcher>
        </Group>

        <Group $w={200}>
          <GroupBody $pl={10}>
            <Stack>
              <CtrlRow>
                <Combo $w={180}>General<Chev /></Combo>
              </CtrlRow>
              <CtrlRow>
                <Slot $w={28}><NumGlyph $s={20}>$</NumGlyph></Slot>
                <Slot $w={20}><Chev /></Slot>
                <Slot $w={36}><NumGlyph $s={21}>%</NumGlyph></Slot>
                <Slot $w={28}><CommaGlyph>,</CommaGlyph></Slot>
                <RowSep $m={3} />
                <Slot $w={30}>
                  <Ico w={20} h={20}>
                    <text x="10" y="8" fontFamily={UI} fontSize="9" fill="#555">0</text>
                    <text x="2" y="18" fontFamily={UI} fontSize="9" fill="#555">.00</text>
                    <path d="M9 5H1M4 2L1 5l3 3" stroke="#2e86d8" strokeWidth="1.200" />
                  </Ico>
                </Slot>
                <Slot $w={34}>
                  <Ico w={20} h={20}>
                    <text x="4" y="8" fontFamily={UI} fontSize="9" fill="#555">.00</text>
                    <text x="12" y="18" fontFamily={UI} fontSize="9" fill="#555">.0</text>
                    <path d="M1 15h9M7 12l3 3-3 3" stroke="#2e86d8" strokeWidth="1.200" />
                  </Ico>
                </Slot>
              </CtrlRow>
            </Stack>
          </GroupBody>
          <GroupLabel $launch>Number</GroupLabel>
          <Launcher><Launch /></Launcher>
        </Group>

        <Group $w={745}>
          <GroupBody $pl={9}>
            <LargeBtn $w={90}>
              <IconSlot>
                <Ico w={36} h={29}>
                  <TableGrid x={1} y={1} w={34} h={27} />
                  <path d="M6 1h17v9H6zM6 19h17v9H6z" fill="#ff9a9f" stroke="#d63c3c" strokeWidth="1.300" />
                  <rect x="7" y="10" width="11" height="9" fill="#7fb2e5" stroke="#2e75b6" />
                </Ico>
              </IconSlot>
              <BtnLine>Conditional</BtnLine>
              <BtnLine>Formatting <Chev /></BtnLine>
            </LargeBtn>
            <LargeBtn $w={66} $ml={7}>
              <IconSlot>
                <Ico w={38} h={34}>
                  <TableGrid x={1} y={1} w={34} h={27} />
                  <rect x="12" y="10" width="23" height="18" fill="#6fa8e0" />
                  <path d="M37 4L20 24l4 3L37 6z" fill="#fff" stroke="#555" />
                  <path d="M12 32q6 2 9-2 1-3-3-5-5 1-6 7z" fill="#2e75b6" />
                </Ico>
              </IconSlot>
              <BtnLine>Format as</BtnLine>
              <BtnLine>Table <Chev /></BtnLine>
            </LargeBtn>
            <Gallery>
              <StyleCell $kind="normal">Normal</StyleCell>
              <StyleCell $kind="bad">Bad</StyleCell>
              <StyleCell $kind="good">Good</StyleCell>
              <StyleCell $kind="neutral">Neutral</StyleCell>
              <StyleCell $kind="calc">Calculation</StyleCell>
              <StyleCell $kind="check">Check Cell</StyleCell>
              <StyleCell $kind="note">Explanatory T...</StyleCell>
              <StyleCell $kind="link">Followed Hyp...</StyleCell>
              <GalleryScroll>
                <Ico w={9} h={6}><path d="M1 5l3.500-3.500L8 5" stroke="#aaa" strokeWidth="1.200" /></Ico>
                <Chev />
                <Ico w={9} h={12}><path d="M0 1h9M1 5l3.500 3.500L8 5" stroke="#444" strokeWidth="1.200" /></Ico>
              </GalleryScroll>
            </Gallery>
          </GroupBody>
          <GroupLabel>Styles</GroupLabel>
        </Group>

        <Group $w={180}>
          <GroupBody $pl={9}>
            <LargeBtn $w={54}>
              <IconSlot>
                <Ico w={40} h={30}>
                  <TableGrid x={3} y={1} w={34} h={27} />
                  <rect x="12" y="10" width="27" height="9" fill="#6fa8e0" stroke="#2e75b6" />
                  <path d="M14 15H3M8 9l-6 6 6 6" stroke="#2e86d8" strokeWidth="1.600" fill="#fff" />
                </Ico>
              </IconSlot>
              <BtnLine $drop>Insert</BtnLine>
              <BtnLine><Chev /></BtnLine>
            </LargeBtn>
            <LargeBtn $w={56}>
              <IconSlot>
                <Ico w={38} h={30}>
                  <TableGrid x={1} y={1} w={34} h={27} />
                  <rect x="6" y="10" width="18" height="9" fill="#6fa8e0" stroke="#2e75b6" />
                  <path d="M24 6l11 17M36 6L24 23" stroke="#e04a3a" strokeWidth="1.500" />
                </Ico>
              </IconSlot>
              <BtnLine $drop>Delete</BtnLine>
              <BtnLine><Chev /></BtnLine>
            </LargeBtn>
            <LargeBtn $w={48}>
              <IconSlot>
                <Ico w={36} h={36}>
                  <path d="M9 1.500h18M9 0v3M27 0v3" stroke="#2e86d8" strokeWidth="1.500" />
                  <TableGrid x={1} y={8} w={34} h={27} />
                  <rect x="10" y="17" width="16" height="9" fill="#6fa8e0" stroke="#2e75b6" />
                </Ico>
              </IconSlot>
              <BtnLine>Format</BtnLine>
              <BtnLine><Chev /></BtnLine>
            </LargeBtn>
          </GroupBody>
          <GroupLabel>Cells</GroupLabel>
        </Group>

        <Group $w={257}>
          <GroupBody $pl={15}>
            <SmallCol $w={118}>
              <SmallRow>
                <Gap $w={3} />
                <Ico w={23} h={20}>
                  <path d="M15 3V1H1l7 9-7 9h14v-2" stroke="#555" strokeWidth="1.300" />
                </Ico>
                AutoSum
                <Gap $w={15} />
                <Chev />
              </SmallRow>
              <SmallRow>
                <Ico w={26} h={20}>
                  <rect x="1" y="1" width="18" height="18" stroke="#666" strokeWidth="1.300" />
                  <path d="M1 4.500h18" stroke="#666" strokeWidth="2" />
                  <path d="M10 7v10M6 13l4 4 4-4" stroke="#2e86d8" strokeWidth="1.300" />
                </Ico>
                Fill
                <Gap $w={4} />
                <Chev />
              </SmallRow>
              <SmallRow>
                <Ico w={26} h={22}>
                  <path d="M10 1l9 10-9 10-9-10z" fill="#fff" stroke="#a34bb5" strokeWidth="1.500" />
                  <path d="M1 11l4.500-5 9 10-4.500 5z" fill="#cf9ad8" stroke="#a34bb5" strokeWidth="1" />
                </Ico>
                Clear
                <Gap $w={4} />
                <Chev />
              </SmallRow>
            </SmallCol>
            <LargeBtn $w={54}>
              <IconSlot>
                <Ico w={37} h={36}>
                  <text x="0" y="15" fontFamily={UI} fontSize="18" fill="#2e86d8">A</text>
                  <text x="0" y="35" fontFamily={UI} fontSize="18" fill="#444">Z</text>
                  <path d="M16 11h19l-7 10v11l-5 3V21z" stroke="#555" strokeWidth="1.300" />
                </Ico>
              </IconSlot>
              <BtnLine>Sort &amp;</BtnLine>
              <BtnLine>Filter <Chev /></BtnLine>
            </LargeBtn>
            <LargeBtn $w={56}>
              <IconSlot>
                <Ico w={36} h={38}>
                  <circle cx="23" cy="13" r="12.300" stroke="#555" strokeWidth="1.300" />
                  <path d="M14 23L1 37" stroke="#555" strokeWidth="1.300" />
                </Ico>
              </IconSlot>
              <BtnLine>Find &amp;</BtnLine>
              <BtnLine>Select <Chev /></BtnLine>
            </LargeBtn>
          </GroupBody>
          <GroupLabel>Editing</GroupLabel>
        </Group>

        <Group $w={77}>
          <GroupBody $center>
            <LargeBtn $w={60}>
              <IconSlot>
                <Ico w={42} h={40}>
                  <rect x="1" y="1" width="38" height="38" stroke="#666" strokeWidth="1.300" fill="#fff" />
                  <path d="M1 4h38" stroke="#666" strokeWidth="5" />
                  <path d="M1 30h38M14 30v9M27 30v9" stroke="#999" />
                  <circle cx="20" cy="18" r="11" stroke="#555" strokeWidth="1.500" fill="#fff" />
                  <rect x="14" y="17" width="4" height="7" fill="#999" />
                  <rect x="18.500" y="11" width="4" height="13" fill="#2e86d8" />
                  <rect x="23" y="15" width="4" height="9" fill="#6fa8e0" />
                  <path d="M28 26l12 13" stroke="#555" strokeWidth="1.500" />
                </Ico>
              </IconSlot>
              <BtnLine>Analyze</BtnLine>
              <BtnLine>Data</BtnLine>
            </LargeBtn>
          </GroupBody>
          <GroupLabel>Analysis</GroupLabel>
        </Group>

        <Group $w={77}>
          <GroupBody $center>
            <LargeBtn $w={60}>
              <IconSlot>
                <Ico w={36} h={36}>
                  <rect x="1" y="1" width="34" height="34" stroke="#e0653a" strokeWidth="2" />
                  <rect x="5" y="5" width="12" height="12" stroke="#e0653a" strokeWidth="1.500" />
                  <rect x="20" y="5" width="11" height="12" stroke="#e0653a" strokeWidth="1.500" />
                  <rect x="5" y="20" width="12" height="11" stroke="#e0653a" strokeWidth="1.500" />
                  <rect x="20" y="20" width="11" height="11" stroke="#e0653a" strokeWidth="1.500" />
                </Ico>
              </IconSlot>
              <BtnLine>Add-ins</BtnLine>
            </LargeBtn>
          </GroupBody>
          <GroupLabel>Add-ins</GroupLabel>
        </Group>
        <Collapse>
          <Ico w={13} h={8}><path d="M1 1l5.500 6L12 1" stroke="#444" strokeWidth="1.200" /></Ico>
        </Collapse>
      </Ribbon>

      <FormulaBar>
        <NameBox>AA27<Chev /></NameBox>
        <Dots>
          <Ico w={3} h={15}>
            <path d="M1.500 0v3M1.500 6v3M1.500 12v3" stroke="#555" strokeWidth="2.400" />
          </Ico>
        </Dots>
        <FxBox>
          <Ico w={16} h={16}><path d="M1 1l14 14M15 1L1 15" stroke="#b5b5b5" strokeWidth="1.200" /></Ico>
          <Ico w={20} h={16}><path d="M1 9l6 6L19 1" stroke="#b5b5b5" strokeWidth="1.200" /></Ico>
          <span>fx</span>
        </FxBox>
        <FormulaInput>
          <Ico w={13} h={8}><path d="M1 1l5.500 6L12 1" stroke="#444" strokeWidth="1.200" /></Ico>
        </FormulaInput>
      </FormulaBar>

      <ColHeaderRow>
        <Corner />
        <ColHeaders>
          {COLS.map((c) => (
            <ColHead key={c}>{c}</ColHead>
          ))}
        </ColHeaders>
      </ColHeaderRow>

      <SheetBody>
        <RowHeaders>
          {ROWS.map((r) => (
            <RowHead key={r}>{r}</RowHead>
          ))}
        </RowHeaders>
        <Grid>
          <Chart
            x={34} y={295} w={758} h={183}
            plot={[122, 774]} labelEnd={108}
            grids={[[313, "$1,000,000"], [368, "$500,000"], [423, "-"]]}
            bars={clipped(423, 413)} barX={132} barStep={65.2} barW={47}
            labels={FY} labelX={137} labelStep={65.2} labelY={453}
          />
          <Chart
            x={792} y={295} w={759} h={182} left
            plot={[855, 1534]} labelEnd={842}
            grids={[[291, "40.0%"], [324, "30.0%"], [357, "20.0%"], [390, "10.0%"], [423, "0.0%"]]}
            bars={clipped(423, 280)} barX={863} barStep={67.9} barW={50}
            labels={FY} labelX={870} labelStep={67.9} labelY={453}
          />
          <Chart
            x={34} y={478} w={758} h={449}
            title="EBITDA per Year" titleX={413}
            plot={[122, 774]} labelEnd={108}
            grids={[[543, "$3,000,000"], [598, "$2,500,000"], [653, "$2,000,000"], [707.500, "$1,500,000"], [762, "$1,000,000"], [817, "$500,000"], [872, "-"]]}
            bars={tops(872, [866, 724, 640, 635, 630, 625, 620, 614, 609, 603])} barX={132} barStep={65.2} barW={47}
            labels={FY} labelX={137} labelStep={65.2} labelY={903}
          />
          <Chart
            x={793} y={476} w={759} h={451} top left
            title="Annual Cash Flow" titleX={1172}
            plot={[888, 1534]} labelEnd={873}
            grids={[[542, "$4,000,000"], [575, "$3,500,000"], [608, "$3,000,000"], [641, "$2,500,000"], [674, "$2,000,000"], [707, "$1,500,000"], [740, "$1,000,000"], [773, "$500,000"], [806, "-"], [839, "($500,000)"], [872, "($1,000,000)"]]}
            bars={[[790, 806], [806, 836], [739, 806], [702, 806], [699, 806], [697, 806], [695, 806], [692, 806], [691, 806], [688, 806], [558, 806]]}
            barX={895} barStep={58.8} barW={44}
            labels={["Year 0", ...FY]} labelX={902} labelStep={58.8} labelY={903}
          />
        </Grid>
        <ScrollTrack>
          <ScrollArrow $up />
          <ScrollThumb />
          <ScrollArrow />
        </ScrollTrack>
      </SheetBody>

      <TabBar>
        <TabNav>
          <Ico w={9} h={16}><path d="M8 1L1 8l7 7" stroke="#555" strokeWidth="1.200" /></Ico>
          <Gap $w={32} />
          <Ico w={9} h={16}><path d="M1 1l7 7-7 7" stroke="#555" strokeWidth="1.200" /></Ico>
          <Gap $w={26} />
          <Ico w={14} h={4}><path d="M1 2h2.500M5.500 2H8M10 2h3" stroke="#555" strokeWidth="3" /></Ico>
        </TabNav>
        <Tabs>
          {TABS.map((t) => (
            <Tab key={t.n} $w={t.w} $kind={t.k}>{t.n}</Tab>
          ))}
        </Tabs>
        <TabTools>
          <Gap $w={13} />
          <Ico w={14} h={4}><path d="M1 2h2.500M5.500 2H8M10 2h3" stroke="#555" strokeWidth="3" /></Ico>
          <Gap $w={25} />
          <Ico w={14} h={14}><path d="M7 0v14M0 7h14" stroke="#444" strokeWidth="1.400" /></Ico>
          <Gap $w={32} />
          <Ico w={3} h={15}><path d="M1.500 0v3M1.500 6v3M1.500 12v3" stroke="#555" strokeWidth="2.400" /></Ico>
          <HScroll>
            <HArrow />
            <HThumb />
            <HArrow $right />
          </HScroll>
        </TabTools>
      </TabBar>

      <StatusBar>
        Ready
        <Gap $w={25} />
        <Ico w={20} h={20}>
          <path d="M1 1h16v15M1 1v17h8M1 5h16M4 9h7M4 13h4" stroke="#666" strokeWidth="1.200" />
          <circle cx="14" cy="14" r="5" stroke="#444" strokeWidth="1.500" fill="#f3f3f3" />
          <circle cx="14" cy="14" r="2" fill="#444" />
        </Ico>
        <Gap $w={22} />
        <Ico w={20} h={22}>
          <circle cx="9" cy="3" r="2.500" stroke="#555" strokeWidth="1.100" />
          <path d="M1 7l6 1v5l-4 8M17 7l-6 1v5l1 2M13 17l5 4M18 17l-5 4" stroke="#555" strokeWidth="1.200" />
        </Ico>
        <Gap $w={1} />
        <span>Accessibility: Investigate</span>
        <StatusRight>
          <ViewBtn $on>
            <Ico w={18} h={18}>
              <path d="M1 1h16v16H1zM6.300 1v16M11.700 1v16M1 6.300h16M1 11.700h16" stroke="#555" strokeWidth="1.200" />
            </Ico>
          </ViewBtn>
          <ViewBtn>
            <Ico w={18} h={20}>
              <rect x="1" y="1" width="16" height="18" stroke="#555" strokeWidth="1.200" />
              <rect x="4" y="4" width="10" height="12" stroke="#555" />
              <path d="M6 7h6M6 10h6M6 13h6" stroke="#555" />
            </Ico>
          </ViewBtn>
          <ViewBtn>
            <Ico w={18} h={20}>
              <path d="M1 1h16v15H1zM10 1v9h7M1 16v3h16v-3" stroke="#555" strokeWidth="1.300" />
            </Ico>
          </ViewBtn>
          <Gap $w={9} />
          <Ico w={9} h={2}><path d="M0 1h9" stroke="#555" strokeWidth="1.300" /></Ico>
          <Gap $w={1} />
          <ZoomTrack />
          <Ico w={10} h={10}><path d="M5 0v10M0 5h10" stroke="#555" strokeWidth="1.200" /></Ico>
          <Gap $w={17} />
          <ZoomPct>90%</ZoomPct>
          <Gap $w={7} />
        </StatusRight>
      </StatusBar>

      <Taskbar>
        <StartBtn>
          <Ico w={21} h={21}>
            <path d="M0 3l9-1.300V10H0zM10 1.500L21 0v10H10zM0 11h9v8.300L0 18zM10 11h11v10l-11-1.500z" fill="#000" />
          </Ico>
        </StartBtn>
        <TaskSearch>
          <Ico w={21} h={22}>
            <circle cx="13" cy="8" r="7" stroke="#222" strokeWidth="1.300" />
            <path d="M8 14l-7 7" stroke="#222" strokeWidth="1.300" />
          </Ico>
          Type here to search
          <FreddieArt />
        </TaskSearch>
        <TaskIcon $w={63}>
          <Ico w={22} h={22}>
            <path d="M0 1h16M0 21h16M1 5h13v12H1zM20 3v4M20 9v4" stroke="#222" strokeWidth="1.300" />
            <path d="M20 15v3" stroke="#222" strokeWidth="2" />
          </Ico>
        </TaskIcon>
        <TaskIcon>
          <Ico w={28} h={26}>
            <path d="M0 1h11l3 4H0z" fill="#e0a31e" />
            <rect x="0" y="5" width="28" height="21" fill="#fcc63f" />
            <path d="M8 26v-8l6-4 6 4v8h-4v-5h-4v5z" fill="#1b7fd1" />
          </Ico>
        </TaskIcon>
        <TaskIcon>
          <Ico w={30} h={32}>
            <ellipse cx="14" cy="11" rx="12" ry="10" fill="#fbe4e4" stroke="#dc5656" strokeWidth="1.500" />
            <path d="M6 8l14 7M12 3l3 12M5 15l13-9" stroke="#e88" />
            <path d="M16 13l3 9M23 14l-6 8" stroke="#555" strokeWidth="1.200" />
            <circle cx="15" cy="27" r="3.500" stroke="#2197d8" strokeWidth="1.800" />
            <circle cx="24" cy="26" r="3.500" stroke="#2197d8" strokeWidth="1.800" />
          </Ico>
        </TaskIcon>
        <TaskIcon $running>
          <Ico w={29} h={31}>
            <ellipse cx="14.500" cy="15.500" rx="11.500" ry="13" stroke="#e3132b" strokeWidth="5.500" />
          </Ico>
        </TaskIcon>
        <TaskIcon $running>
          <Ico w={30} h={32}>
            <circle cx="14" cy="15" r="14" fill="#e94335" />
            <path d="M14 15L2 22A14 14 0 0 1 4 5z" fill="#34a853" />
            <path d="M14 15L2 22a14 14 0 0 0 16 7z" fill="#34a853" />
            <path d="M14 8h13a14 14 0 0 1-9 21z" fill="#fbbc04" />
            <circle cx="14" cy="15" r="6.500" fill="#fff" />
            <circle cx="14" cy="15" r="5" fill="#4285f4" />
            <circle cx="22" cy="23" r="9" fill="#b9bcbf" stroke="#8a8a8a" />
            <path d="M14 23h16" stroke="#8a8a8a" />
          </Ico>
        </TaskIcon>
        <TaskIcon $running>
          <Ico w={28} h={30}>
            <path d="M8 3l18-2-3 24-21 3z" fill="#bfe0ee" stroke="#5b90a8" />
            <path d="M8 3l18-2-.5 4-18 2z" fill="#6fa8c4" />
            <path d="M10 10l11-1M9 14l11-1M9 18l11-1" stroke="#8bb8cc" />
          </Ico>
        </TaskIcon>
        <TaskIcon $running>
          <ExcelLogo s={30} />
        </TaskIcon>
        <Tray>
          <Weather>
            <SunDot />
            77°F  Sunny
          </Weather>
          <Gap $w={25} />
          <TrayIcon><Ico w={16} h={9}><path d="M.5 8.500L8 1l7.500 7.500" stroke="#222" strokeWidth="1.200" /></Ico></TrayIcon>
          <TrayIcon>
            <Ico w={16} h={20}>
              <path d="M2 2q4-2 8 0M2 18q4 2 8 0" stroke="#222" />
              <rect x="1" y="5" width="9" height="10" rx="1.500" stroke="#222" strokeWidth="1.100" />
              <path d="M11 8l4-2v8l-4-2z" stroke="#222" />
            </Ico>
          </TrayIcon>
          <TrayIcon>
            <Ico w={22} h={16}>
              <path d="M5 15a4 4 0 0 1-1-8 6 6 0 0 1 11-2 5 5 0 0 1 3 10z" fill="#d8d8d8" stroke="#333" strokeWidth="1.100" />
              <path d="M4 10h15" stroke="#777" />
            </Ico>
          </TrayIcon>
          <TrayIcon>
            <Ico w={22} h={21}>
              <path d="M6 4h15v13H1V9M11 17v3M6 20h10" stroke="#222" strokeWidth="1.100" />
              <rect x="0.500" y="0.500" width="5" height="7" fill="#cfdfea" stroke="#222" />
            </Ico>
          </TrayIcon>
          <TrayIcon>
            <Ico w={20} h={20}>
              <path d="M1 7h4l5-5v16l-5-5H1z" stroke="#222" strokeWidth="1.100" />
              <path d="M13 7q2 3 0 6" stroke="#222" />
              <path d="M16 4q4 6 0 12" stroke="#999" />
            </Ico>
          </TrayIcon>
          <Clock>9:28 AM<br />9/5/2023</Clock>
          <Notify>
            <Ico w={20} h={18}>
              <rect width="20" height="18" fill="#000" />
              <path d="M3 5h14M3 9h14M3 13h9" stroke="#fff" strokeWidth="1.300" />
            </Ico>
            <NotifyBadge>2</NotifyBadge>
          </Notify>
        </Tray>
      </Taskbar>
    </Page>
  );
}
